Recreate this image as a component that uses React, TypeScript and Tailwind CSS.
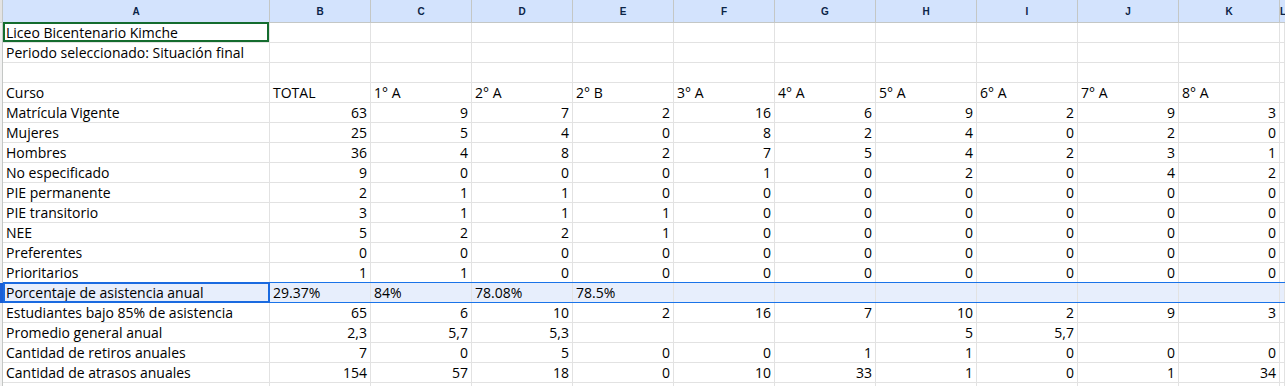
import React from "react";

type Cell = string | number | "";

const COLS = ["A", "B", "C", "D", "E", "F", "G", "H", "I", "J", "K", "L"];

// filas de la hoja: etiqueta + valores B..K
const ROWS: { label: string; values: Cell[]; text?: boolean }[] = [
  { label: "Liceo Bicentenario Kimche", values: [] },
  { label: "Periodo seleccionado: Situación final", values: [] },
  { label: "", values: [] },
  { label: "Curso", values: ["TOTAL", "1° A", "2° A", "2° B", "3° A", "4° A", "5° A", "6° A", "7° A", "8° A"], text: true },
  { label: "Matrícula Vigente", values: [63, 9, 7, 2, 16, 6, 9, 2, 9, 3] },
  { label: "Mujeres", values: [25, 5, 4, 0, 8, 2, 4, 0, 2, 0] },
  { label: "Hombres", values: [36, 4, 8, 2, 7, 5, 4, 2, 3, 1] },
  { label: "No especificado", values: [9, 0, 0, 0, 1, 0, 2, 0, 4, 2] },
  { label: "PIE permanente", values: [2, 1, 1, 0, 0, 0, 0, 0, 0, 0] },
  { label: "PIE transitorio", values: [3, 1, 1, 1, 0, 0, 0, 0, 0, 0] },
  { label: "NEE", values: [5, 2, 2, 1, 0, 0, 0, 0, 0, 0] },
  { label: "Preferentes", values: [0, 0, 0, 0, 0, 0, 0, 0, 0, 0] },
  { label: "Prioritarios", values: [1, 1, 0, 0, 0, 0, 0, 0, 0, 0] },
  { label: "Porcentaje de asistencia anual", values: ["29.37%", "84%", "78.08%", "78.5%"], text: true },
  { label: "Estudiantes bajo 85% de asistencia", values: [65, 6, 10, 2, 16, 7, 10, 2, 9, 3] },
  { label: "Promedio general anual", values: ["2,3", "5,7", "5,3", "", "", "", "5", "5,7", "", ""] },
  { label: "Cantidad de retiros anuales", values: [7, 0, 5, 0, 0, 1, 1, 0, 0, 0] },
  { label: "Cantidad de atrasos anuales", values: [154, 57, 18, 0, 10, 33, 1, 0, 1, 34] },
  { label: "", values: [] },
];

const SELECTED_ROW = 13;
const GRID = "grid grid-cols-[3px_267px_repeat(10,101px)_1fr]";

function ColumnHeader() {
  return (
    <div className={`${GRID} h-[23px] bg-[#d3e3fd] border-b border-[#c4c7c5]`}>
      <div className="bg-[#e3e3e3] border-r border-[#c4c7c5]" />
      {COLS.map((c) => (
        <div
          key={c}
          className="flex items-center justify-center border-r border-[#c4c7c5] text-[10px] font-bold text-[#0b2447] font-['Liberation_Sans',Arial,sans-serif]"
        >
          {c}
        </div>
      ))}
    </div>
  );
}

function DataRow({ index }: { index: number }) {
  const row = ROWS[index];
  const selected = index === SELECTED_ROW;
  const cells: Cell[] = Array.from({ length: 11 }, (_, i) => row.values[i] ?? "");

  return (
    <div className={`${GRID} relative h-[20px] ${selected ? "bg-[#e7eefc]" : "bg-white"}`}>
      <div className={selected ? "bg-[#1a5fd6]" : "bg-[#f1f1f1] border-r border-[#c4c7c5]"} />
      <div className="relative border-r border-b border-[#e2e2e2] pl-[3px] leading-[19px] whitespace-nowrap">
        {row.label}
        {index === 0 && (
          <div className="pointer-events-none absolute -top-px left-0 right-0 bottom-0 border-2 border-[#146c2e]" />
        )}
      </div>
      {cells.map((v, i) => {
        const left = row.text || typeof v === "string" && v.includes("%");
        return (
          <div
            key={i}
            className={`border-r border-b border-[#e2e2e2] leading-[19px] whitespace-nowrap ${
              left ? "pl-[3px] text-left" : "pr-[3px] text-right"
            }`}
          >
            {v}
          </div>
        );
      })}
      {selected && (
        <>
          {/* franja de selección de la fila completa */}
          <div className="pointer-events-none absolute left-[3px] right-0 -top-px bottom-0 border-y border-[#1a73e8]" />
          <div className="pointer-events-none absolute left-[3px] w-[267px] -top-px bottom-0 border-2 border-[#1a6ae0]" />
        </>
      )}
    </div>
  );
}

export default function App() {
  return (
    <div className="w-[1285px] h-[386px] overflow-hidden bg-white text-black text-[14px] font-['Open_Sans',Arial,sans-serif]">
      <ColumnHeader />
      {ROWS.map((_, i) => (
        <DataRow key={i} index={i} />
      ))}
    </div>
  );
}
